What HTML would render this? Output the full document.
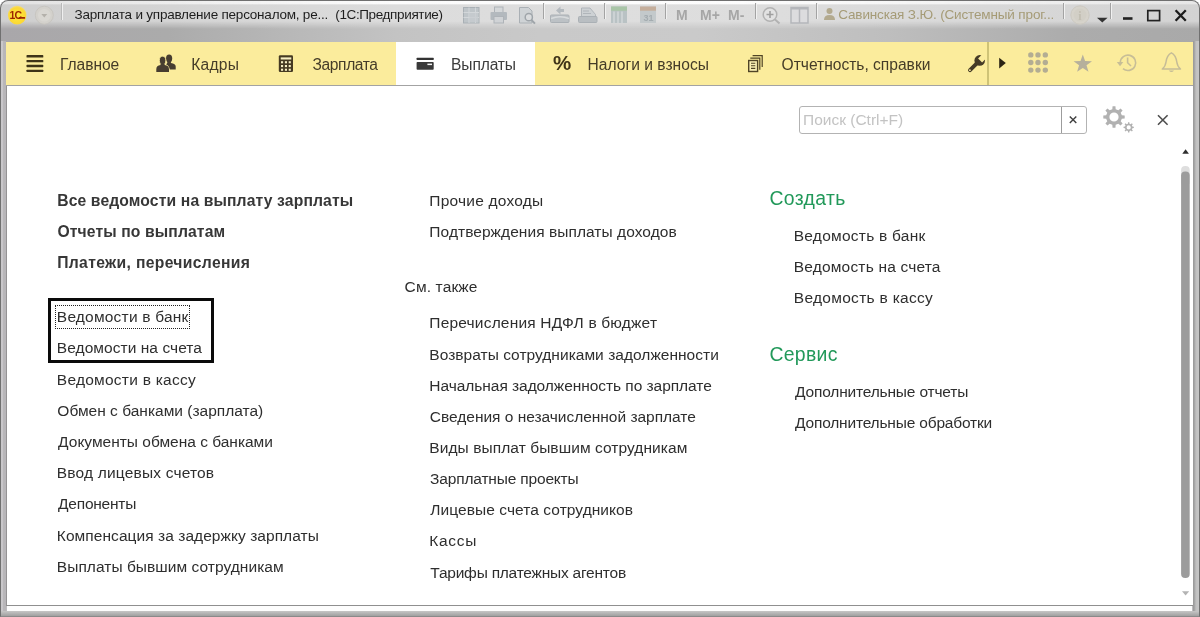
<!DOCTYPE html>
<html lang="ru">
<head>
<meta charset="utf-8">
<title>Зарплата и управление персоналом</title>
<style>
*{box-sizing:border-box;margin:0;padding:0}
html,body{width:1200px;height:617px;overflow:hidden;background:#fff}
body{font-family:"Liberation Sans",sans-serif;position:relative;color:#3c3c3c}
.abs{position:absolute}
#win{position:absolute;left:0;top:0;width:1200px;height:617px;border-radius:8px 8px 0 0;background:#bdbbbe;overflow:hidden}
#txt{position:absolute;left:0;top:0;width:1200px;height:617px;will-change:transform;transform:translateZ(0)}
#frame{position:absolute;left:0;top:0;width:1200px;height:617px;border-radius:8px 8px 0 0;border:1px solid #707070;border-bottom-color:#8a8a8a}
#title{position:absolute;left:0;top:0;width:1200px;height:42px;background:linear-gradient(90deg,#a9a7aa 0,#ababab 14%,#c3c3c3 33%,#c9c9c9 45%,#cacaca 58%,#bebebe 74%,#acacac 89%,#a9a9a9 100%)}
#title2{position:absolute;left:0;top:0;width:1200px;height:30px;background:linear-gradient(90deg,#cfcfcf 0,#d3d3d3 12%,#dcdcdc 33%,#dedede 50%,#dddddd 65%,#d7d7d7 86%,#d3d3d3 100%);-webkit-mask-image:linear-gradient(#000 0,#000 21px,transparent 29px);mask-image:linear-gradient(#000 0,#000 21px,transparent 29px)}
#title3{position:absolute;left:1px;top:1px;width:1198px;height:4px;background:linear-gradient(90deg,rgba(255,255,255,.4) 0,rgba(255,255,255,.55) 12%,rgba(255,255,255,.9) 33%,rgba(255,255,255,.92) 62%,rgba(255,255,255,.6) 86%,rgba(255,255,255,.45) 100%);-webkit-mask-image:linear-gradient(#000 0,#000 2.500px,transparent 4px);mask-image:linear-gradient(#000 0,#000 2.500px,transparent 4px)}
#nav{position:absolute;left:6px;top:42px;width:1187px;height:43px;background:#fbec9c}
#navline{position:absolute;left:6px;top:85px;width:1187px;height:1px;background:#a3a3a3;z-index:2}
#content{position:absolute;left:6px;top:86px;width:1187px;height:519px;background:#fff;border-left:1px solid #959395}
#botline{position:absolute;left:6px;top:605px;width:1187px;height:1px;background:#8f8f8f}
#botwhite{position:absolute;left:7px;top:606px;width:1185px;height:5px;background:#fdfdfd}
#tab{position:absolute;left:396px;top:42px;width:139px;height:43px;background:#fff}
.nt{position:absolute;top:55px;font-size:15.600px;line-height:20px;color:#453c28;white-space:nowrap}
.tt{position:absolute;top:7.200px;font-size:13.500px;line-height:16px;white-space:nowrap;color:#1e1e1e}
.l{position:absolute;font-size:15.500px;line-height:20px;white-space:nowrap;color:#2e2e2e}
.b{font-weight:bold;color:#373737;font-size:15.700px}
.h{position:absolute;font-size:19.400px;line-height:24px;color:#22995a;white-space:nowrap}
svg{position:absolute;overflow:visible}
</style>
</head>
<body>
<div id="win">
<div id="title"></div><div id="title2"></div><div id="title3"></div>
<div id="nav"></div>
<div id="navline"></div>
<div id="tab"></div>
<div id="content"></div>
<div id="botline"></div>
<div id="botwhite"></div>
<div class="abs" style="left:0;top:41px;width:6px;height:576px;background:linear-gradient(90deg,#858385 0,#858385 1px,#cac8cb 1px,#c8c6c9 3px,#b9b7ba 3.500px,#b7b5b8 6px)"></div>
<div class="abs" style="left:1193px;top:41px;width:7px;height:576px;background:linear-gradient(90deg,#979797 0,#a6a6a6 1.500px,#c0c0c0 3px,#c6c6c6 6px,#838383 6.200px)"></div>
<div class="abs" style="left:0;top:611px;width:1200px;height:6px;background:linear-gradient(#c6c6c6,#a2a2a2 80%,#8c8c8c)"></div>

<div id="txt">
<!-- TITLEBAR -->
<!-- 1C logo -->
<svg style="left:7px;top:5px" width="21" height="21" viewBox="0 0 21 21"><defs><radialGradient id="lg" cx="50%" cy="55%" r="55%"><stop offset="0" stop-color="#ffe93a"/><stop offset=".8" stop-color="#fbd835"/><stop offset="1" stop-color="#f3dc7a"/></radialGradient></defs><circle cx="10.200" cy="10.100" r="9.300" fill="url(#lg)"/><text x="2.400" y="13.800" font-family="Liberation Sans, sans-serif" font-size="10.500" font-weight="bold" fill="#9c2500" letter-spacing="-.7">1С</text><rect x="11.800" y="11.900" width="6.300" height="1.900" rx=".5" fill="#9c2500"/></svg>
<!-- history dropdown -->
<svg style="left:34px;top:5px" width="21" height="21" viewBox="0 0 21 21"><circle cx="10.300" cy="10.200" r="9" fill="#d3d1cc" stroke="#c4c2bd" stroke-width=".8"/><circle cx="10.300" cy="10.200" r="6.300" fill="#d9d7d2"/><path d="M7.300 9 H13.300 L10.300 12.400 Z" fill="#b4b1ab"/></svg>
<div class="abs" style="left:61px;top:3px;width:1px;height:17px;background:#b9b9b9"></div><div class="abs" style="left:62px;top:3px;width:1px;height:17px;background:#efefef"></div>
<div class="tt" style="left:74.50px;letter-spacing:-0.217px">Зарплата и управление персоналом, ре...</div>
<div class="tt" style="left:335.25px;letter-spacing:-0.367px">(1С:Предприятие)</div>

<svg style="left:0;top:0" width="1200" height="42" viewBox="0 0 1200 42">
<!-- save/table -->
<g><rect x="463.500" y="7.500" width="15.500" height="15.500" fill="#bfc5c9" stroke="#a9b0b5"/><path d="M463.500 12.500 H479 M463.500 17.500 H479 M469 7.500 V23 M475.500 7.500 V23" stroke="#d3d7da" stroke-width="1"/><rect x="469.500" y="13" width="9" height="9.500" fill="#c7ccd0" opacity=".7"/></g>
<!-- printer -->
<g><rect x="494.500" y="7" width="8.500" height="6" fill="#d5d8da" stroke="#aeb3b8"/><rect x="490.500" y="12" width="16.500" height="8" rx="1" fill="#b3b9be"/><rect x="494" y="16.500" width="9.500" height="6.500" fill="#d0d3d6" stroke="#aeb3b8"/></g>
<!-- preview -->
<g><path d="M519.500 7.500 H528.500 L532 11 V23 H519.500 Z" fill="#cfd3d6" stroke="#aab0b5"/><circle cx="528.800" cy="17.200" r="3.600" fill="#dadcde" stroke="#9fa5aa" stroke-width="1.500"/><path d="M531.400 20 L535 23.600" stroke="#9fa5aa" stroke-width="2"/></g>
<!-- tray arrow -->
<g><path d="M556 10.500 L560.500 6.500 V9 H564 V12 H560.500 V14.500 Z" fill="#b4babf"/><rect x="550.500" y="15" width="18.500" height="7.500" rx="1" fill="#bcc1c5" stroke="#aab0b5"/><path d="M551 18.500 Q560 15 569 18.500" stroke="#d8dbdd" fill="none" stroke-width="1.400"/></g>
<!-- doc tray -->
<g><path d="M581.500 8 H590 L595.500 14.500 V17 H581.500 Z" fill="#cdd1d4" stroke="#b0b5ba"/><rect x="578.500" y="16.500" width="18.500" height="6" rx="1" fill="#b9bec2" stroke="#aab0b5"/><path d="M583 11 H589 M583 13.500 H591" stroke="#b0b5ba"/></g>
<!-- calc -->
<g><rect x="611" y="6.500" width="16" height="16.500" fill="#b9c2c4"/><rect x="611" y="6.500" width="16" height="4.200" fill="#a9c5a7"/><path d="M614 11.500 V23 M618 11.500 V23 M622 11.500 V23" stroke="#d2d8d9" stroke-width="1.500"/></g>
<!-- calendar -->
<g><rect x="640" y="6.500" width="16" height="16.500" fill="#c3c9cb"/><rect x="640" y="6.500" width="16" height="4.200" fill="#c5ae9b"/><text x="643.500" y="21" font-family="Liberation Sans, sans-serif" font-size="9" font-weight="bold" fill="#a4acb0">31</text></g>
<!-- zoom -->
<g><circle cx="770" cy="14.500" r="6.800" fill="#e2e2e2" stroke="#b2b2b2" stroke-width="1.500"/><path d="M766.500 14.500 H773.500 M770 11 V18" stroke="#9f9f9f" stroke-width="1.600"/><path d="M775 19.500 L779.500 23.500" stroke="#b2b2b2" stroke-width="2"/></g>
<!-- panels -->
<g><rect x="791" y="7.500" width="17" height="15.500" fill="#dcdcde" stroke="#b4b6ba" stroke-width="1.500"/><rect x="791" y="7" width="17" height="2.500" fill="#b4b6ba"/><path d="M799.500 9 V23" stroke="#b4b6ba" stroke-width="1.500"/></g>
<!-- user -->
<g fill="#b3aa8f"><circle cx="829.500" cy="11" r="3"/><path d="M824 20 Q824 15 829.500 15 Q835 15 835 20 Z"/></g>
<!-- info -->
<g><circle cx="1080" cy="15" r="9.200" fill="#d6d3cb" stroke="#cbc8c0"/><circle cx="1080" cy="15" r="6.500" fill="#d2cfc6"/><text x="1078.300" y="19.500" font-family="Liberation Serif, serif" font-size="12" font-weight="bold" fill="#c2beb2">i</text></g>
<!-- window controls -->
<path d="M1097 17.800 H1107.600 L1102.300 22.600 Z" fill="#333"/>
<rect x="1123" y="17.200" width="9.500" height="2.600" fill="#222"/>
<rect x="1147.800" y="10.600" width="11.800" height="10" fill="none" stroke="#222" stroke-width="1.700"/>
<path d="M1175.600 10.300 L1185.800 20.800 M1185.800 10.300 L1175.600 20.800" stroke="#1c1c1c" stroke-width="2.300"/>
</svg>
<div class="tt" style="left:676px;top:7px;font-weight:bold;font-size:14px;color:#a6a6a6">M</div>
<div class="tt" style="left:700px;top:7px;font-weight:bold;font-size:14px;color:#a6a6a6">M+</div>
<div class="tt" style="left:728px;top:7px;font-weight:bold;font-size:14px;color:#a6a6a6">M-</div>
<div class="abs" style="left:543px;top:3px;width:1px;height:16px;background:#a3a3a3"></div><div class="abs" style="left:544px;top:3px;width:1px;height:16px;background:#f1f1f1"></div><div class="abs" style="left:604px;top:3px;width:1px;height:16px;background:#a3a3a3"></div><div class="abs" style="left:605px;top:3px;width:1px;height:16px;background:#f1f1f1"></div><div class="abs" style="left:665px;top:3px;width:1px;height:16px;background:#a3a3a3"></div><div class="abs" style="left:666px;top:3px;width:1px;height:16px;background:#f1f1f1"></div><div class="abs" style="left:755px;top:3px;width:1px;height:16px;background:#a3a3a3"></div><div class="abs" style="left:756px;top:3px;width:1px;height:16px;background:#f1f1f1"></div><div class="abs" style="left:816px;top:3px;width:1px;height:16px;background:#a3a3a3"></div><div class="abs" style="left:817px;top:3px;width:1px;height:16px;background:#f1f1f1"></div><div class="abs" style="left:1063px;top:3px;width:1px;height:16px;background:#a3a3a3"></div><div class="abs" style="left:1064px;top:3px;width:1px;height:16px;background:#f1f1f1"></div><div class="abs" style="left:1110px;top:3px;width:1px;height:16px;background:#a3a3a3"></div><div class="abs" style="left:1111px;top:3px;width:1px;height:16px;background:#f1f1f1"></div>
<div class="tt" style="left:838.25px;color:#a59b76;letter-spacing:-0.148px">Савинская З.Ю. (Системный прог...</div>

<!-- NAV -->
<!-- hamburger -->
<svg style="left:26px;top:54px" width="18" height="20" viewBox="0 0 18 20"><g fill="#3f3418"><rect x="0.5" y="1.1" width="16.8" height="2.4" rx=".6"/><rect x="0.5" y="5.950" width="16.800" height="2.400" rx=".6"/><rect x="0.5" y="10.800" width="16.800" height="2.400" rx=".6"/><rect x="0.5" y="15.650" width="16.800" height="2.400" rx=".6"/></g></svg>
<div class="nt" style="left:59.95px;letter-spacing:-0.042px">Главное</div>
<!-- people -->
<svg style="left:155px;top:53px" width="22" height="20" viewBox="155 53 22 20"><g fill="#473d30"><ellipse cx="169.100" cy="58.500" rx="3.100" ry="4"/><path d="M167.300 61.500 H170.900 V63 Q175.700 63.600 175.700 66.600 V69.500 H169.800 Q169.400 65.800 166.200 64.400 Q166.800 63.300 167.300 63 Z"/><ellipse cx="162.600" cy="60.400" rx="3.200" ry="4.200" stroke="#fbec9c" stroke-width=".8"/><path d="M156.300 72 V69.200 Q156.300 65.700 160.600 65.100 V63.500 H164.600 V65.100 Q169 65.700 169 69.200 V72 Z"/></g></svg>
<div class="nt" style="left:191.15px;letter-spacing:0.275px">Кадры</div>
<!-- calculator -->
<svg style="left:278px;top:54px" width="16" height="19" viewBox="278 54 16 19"><rect x="278.8" y="55.2" width="14.2" height="16.8" rx="1.3" fill="#453a22"/><g fill="#f7efc4"><rect x="280.7" y="57.4" width="10.6" height="2.1"/><rect x="281" y="61.2" width="2.1" height="2.1"/><rect x="284.9" y="61.2" width="2.1" height="2.1"/><rect x="288.7" y="61.2" width="2.1" height="2.1"/><rect x="281" y="65" width="2.1" height="2.1"/><rect x="284.9" y="65" width="2.1" height="2.1"/><rect x="288.7" y="65" width="2.1" height="2.1"/><rect x="281" y="68.7" width="2.1" height="2.1"/><rect x="284.9" y="68.7" width="2.1" height="2.1"/><rect x="288.7" y="68.7" width="2.1" height="2.1"/></g></svg>
<div class="nt" style="left:312.50px;letter-spacing:-0.393px">Зарплата</div>
<!-- card -->
<svg style="left:416px;top:56px" width="19" height="15" viewBox="416 56 19 15"><rect x="416.6" y="57.7" width="17.1" height="2.3" rx=".5" fill="#333"/><rect x="416.6" y="62" width="17.1" height="7.8" rx=".8" fill="#3a3a3a"/><rect x="427.4" y="63.6" width="4.6" height="1.5" fill="#f4f4f4"/></svg>
<div class="nt" style="left:451.05px;color:#3c3c3c;letter-spacing:-0.133px">Выплаты</div>
<!-- percent -->
<div class="abs" style="left:553px;top:51px;font-size:20.500px;line-height:24px;font-weight:bold;color:#3f3418">%</div>
<div class="nt" style="left:587.55px;letter-spacing:0.014px">Налоги и взносы</div>
<!-- docs -->
<svg style="left:747px;top:54px" width="18" height="19" viewBox="747 54 18 19"><g fill="none" stroke="#4f4426" stroke-width="1.200"><path d="M752.600 55.700 H762.200 V67"/><path d="M750.300 58.100 H759.800 V69.700"/><rect x="748.700" y="60.500" width="8.900" height="11" fill="#f9efb4" stroke-width="1.400"/></g><g stroke="#4f4426" stroke-width="1.100"><path d="M751 63.200 H755.300 M751 65.800 H755.300 M751 68.400 H755.300"/></g></svg>
<div class="nt" style="left:781.55px;letter-spacing:-0.014px">Отчетность, справки</div>
<!-- wrench -->
<svg style="left:967px;top:54px" width="19" height="19" viewBox="967 54 19 19"><circle cx="979.700" cy="60.400" r="5.300" fill="#463b26"/><path d="M977.300 62.800 L970 70.100" stroke="#463b26" stroke-width="3.900" stroke-linecap="round"/><path d="M979.900 60.200 L978.100 58.400 L983 53.500 L987 57.500 L982.100 62.400 Z" fill="#fbec9c"/><circle cx="969.900" cy="70.200" r=".9" fill="#f6eaa0"/></svg>
<div class="abs" style="left:987.400px;top:42px;width:1.400px;height:43px;background:#cfc376"></div>
<svg style="left:998px;top:57px" width="9" height="12" viewBox="0 0 9 12"><path d="M1.200 .700 L7.800 6 L1.200 11.400 Z" fill="#2b2414"/></svg>
<!-- grid -->
<svg style="left:1027px;top:51px" width="23" height="23" viewBox="1027 51 23 23"><g fill="#b3ad93"><circle cx="1030.800" cy="54.900" r="2.700"/><circle cx="1038" cy="54.900" r="2.700"/><circle cx="1045.300" cy="54.900" r="2.700"/><circle cx="1030.800" cy="62.500" r="2.700"/><circle cx="1038" cy="62.500" r="2.700"/><circle cx="1045.300" cy="62.500" r="2.700"/><circle cx="1030.800" cy="70.100" r="2.700"/><circle cx="1038" cy="70.100" r="2.700"/><circle cx="1045.300" cy="70.100" r="2.700"/></g></svg>
<!-- star -->
<svg style="left:1072px;top:53px" width="22" height="20" viewBox="1072 53 22 20"><path d="M1082.800 54.600 L1085.100 61 L1092 61.200 L1086.500 65.300 L1088.500 71.800 L1082.800 67.900 L1077.100 71.800 L1079.100 65.300 L1073.600 61.200 L1080.500 61 Z" fill="#b6b09c"/></svg>
<!-- history -->
<svg style="left:1115px;top:52px" width="23" height="22" viewBox="1115 52 23 22"><g fill="none" stroke="#c7be97" stroke-width="1.600"><path d="M1120.300 62.600 A7.700 7.700 0 1 1 1123 68.700"/><path d="M1127.600 57.600 V62.700 L1131 66"/></g><path d="M1116.800 62.100 L1123.300 62.100 L1120 66.300 Z" fill="#c7be97"/></svg>
<!-- bell -->
<svg style="left:1160px;top:51px" width="23" height="23" viewBox="1160 51 23 23"><path d="M1171.400 52.800 C1168 54.500 1166.500 58 1166 62 C1165.600 65 1164.500 67.300 1162.300 69 H1180.500 C1178.300 67.300 1177.200 65 1176.800 62 C1176.300 58 1174.800 54.500 1171.400 52.800 Z" fill="none" stroke="#c5bc97" stroke-width="1.500" stroke-linejoin="round"/><path d="M1168.800 70.500 H1174 Q1171.400 73.600 1168.800 70.500 Z" fill="#c5bc97"/></svg>

<!-- CONTENT -->
<div class="abs" style="left:799px;top:106px;width:288px;height:28px;border:1px solid #b3b3b3;border-radius:3px;background:#fff"></div>
<div class="abs" style="left:1061px;top:107px;width:1px;height:26px;background:#9c9c9c"></div>
<div class="abs" style="left:803px;top:109.500px;font-size:15.500px;line-height:20px;color:#c3c3c3;white-space:nowrap">Поиск (Ctrl+F)</div>
<svg style="left:1060px;top:100px" width="140" height="40" viewBox="1060 100 140 40">
<path d="M1069.800 116.400 L1076.300 122.900 M1076.300 116.400 L1069.800 122.900" stroke="#3f3f3f" stroke-width="1.400"/>
<path d="M1112.32 109.18 L1112.56 106.30 L1115.44 106.30 L1115.68 109.18 L1118.34 110.28 L1120.55 108.41 L1122.59 110.45 L1120.72 112.66 L1121.82 115.32 L1124.70 115.56 L1124.70 118.44 L1121.82 118.68 L1120.72 121.34 L1122.59 123.55 L1120.55 125.59 L1118.34 123.72 L1115.68 124.82 L1115.44 127.70 L1112.56 127.70 L1112.32 124.82 L1109.66 123.72 L1107.45 125.59 L1105.41 123.55 L1107.28 121.34 L1106.18 118.68 L1103.30 118.44 L1103.30 115.56 L1106.18 115.32 L1107.28 112.66 L1105.41 110.45 L1107.45 108.41 L1109.66 110.28 Z M1109.40 117.00 A4.6 4.6 0 1 0 1118.60 117.00 A4.6 4.6 0 1 0 1109.40 117.00 Z" fill="#b1b1b1" fill-rule="evenodd"/>
<path d="M1127.90 123.69 L1128.01 122.25 L1129.39 122.25 L1129.50 123.69 L1130.76 124.21 L1131.85 123.27 L1132.83 124.25 L1131.89 125.34 L1132.41 126.60 L1133.85 126.71 L1133.85 128.09 L1132.41 128.20 L1131.89 129.46 L1132.83 130.55 L1131.85 131.53 L1130.76 130.59 L1129.50 131.11 L1129.39 132.55 L1128.01 132.55 L1127.90 131.11 L1126.64 130.59 L1125.55 131.53 L1124.57 130.55 L1125.51 129.46 L1124.99 128.20 L1123.55 128.09 L1123.55 126.71 L1124.99 126.60 L1125.51 125.34 L1124.57 124.25 L1125.55 123.27 L1126.64 124.21 Z M1126.60 127.40 A2.1 2.1 0 1 0 1130.80 127.40 A2.1 2.1 0 1 0 1126.60 127.40 Z" fill="#b1b1b1" fill-rule="evenodd"/>
<path d="M1158 115.200 L1167.600 124.800 M1167.600 115.200 L1158 124.800" stroke="#4d4d4d" stroke-width="1.600"/>
</svg>
<!-- scrollbar -->
<svg style="left:1176px;top:140px" width="18" height="465" viewBox="1176 140 18 465">
<path d="M1182.300 153.700 H1188.900 L1185.600 149.300 Z" fill="#2e2e2e"/>
<rect x="1181.100" y="166" width="8.600" height="20" rx="4.100" fill="#dedede"/>
<rect x="1181.100" y="171.500" width="8.600" height="406.500" rx="4.100" fill="#9c9c9c"/>
<path d="M1182 591.200 H1189.200 L1185.600 595.600 Z" fill="#b3b3b3"/>
</svg>

<div class="l b" style="left:57.20px;top:190.9px;letter-spacing:0.127px">Все ведомости на выплату зарплаты</div>
<div class="l b" style="left:57.45px;top:222.1px;letter-spacing:0.121px">Отчеты по выплатам</div>
<div class="l b" style="left:57.20px;top:253.3px;letter-spacing:0.340px">Платежи, перечисления</div>
<div class="l" style="left:56.85px;top:307.1px;letter-spacing:0.203px">Ведомости в банк</div>
<div class="l" style="left:56.85px;top:338.3px;letter-spacing:0.053px">Ведомости на счета</div>
<div class="l" style="left:56.85px;top:369.5px;letter-spacing:0.244px">Ведомости в кассу</div>
<div class="l" style="left:57.35px;top:400.7px;letter-spacing:0.004px">Обмен с банками (зарплата)</div>
<div class="l" style="left:58.10px;top:431.9px;letter-spacing:-0.004px">Документы обмена с банками</div>
<div class="l" style="left:56.85px;top:463.1px;letter-spacing:0.178px">Ввод лицевых счетов</div>
<div class="l" style="left:58.10px;top:494.3px;letter-spacing:-0.238px">Депоненты</div>
<div class="l" style="left:56.85px;top:525.5px;letter-spacing:0.058px">Компенсация за задержку зарплаты</div>
<div class="l" style="left:56.85px;top:556.7px;letter-spacing:0.044px">Выплаты бывшим сотрудникам</div>
<div class="l" style="left:429.35px;top:191.0px;letter-spacing:0.217px">Прочие доходы</div>
<div class="l" style="left:429.35px;top:222.1px;letter-spacing:0.059px">Подтверждения выплаты доходов</div>
<div class="l" style="left:404.55px;top:277.2px;letter-spacing:0.144px">См. также</div>
<div class="l" style="left:429.35px;top:313.3px;letter-spacing:0.188px">Перечисления НДФЛ в бюджет</div>
<div class="l" style="left:429.35px;top:344.5px;letter-spacing:0.028px">Возвраты сотрудниками задолженности</div>
<div class="l" style="left:429.35px;top:375.6px;letter-spacing:-0.051px">Начальная задолженность по зарплате</div>
<div class="l" style="left:429.85px;top:406.8px;letter-spacing:-0.023px">Сведения о незачисленной зарплате</div>
<div class="l" style="left:429.35px;top:437.9px;letter-spacing:0.071px">Виды выплат бывшим сотрудникам</div>
<div class="l" style="left:430.10px;top:469.1px;letter-spacing:-0.171px">Зарплатные проекты</div>
<div class="l" style="left:430.35px;top:500.2px;letter-spacing:0.065px">Лицевые счета сотрудников</div>
<div class="l" style="left:429.35px;top:531.4px;letter-spacing:0.675px">Кассы</div>
<div class="l" style="left:430.35px;top:562.5px;letter-spacing:-0.226px">Тарифы платежных агентов</div>
<div class="h" style="left:769.50px;top:186.1px;letter-spacing:0.342px">Создать</div>
<div class="l" style="left:793.75px;top:225.7px;letter-spacing:0.247px">Ведомость в банк</div>
<div class="l" style="left:793.75px;top:256.8px;letter-spacing:0.185px">Ведомость на счета</div>
<div class="l" style="left:793.75px;top:287.9px;letter-spacing:0.300px">Ведомость в кассу</div>
<div class="h" style="left:769.50px;top:341.7px;letter-spacing:0.290px">Сервис</div>
<div class="l" style="left:795.00px;top:382.1px;letter-spacing:-0.173px">Дополнительные отчеты</div>
<div class="l" style="left:795.00px;top:413.2px;letter-spacing:-0.183px">Дополнительные обработки</div>
<div class="abs" style="left:48px;top:298px;width:166px;height:65px;border:3px solid #0a0a0a"></div>
<div class="abs" style="left:55px;top:305px;width:135px;height:24px;border:1px dotted #222"></div>
</div>
<div id="frame"></div>
</div>
</body>
</html>
